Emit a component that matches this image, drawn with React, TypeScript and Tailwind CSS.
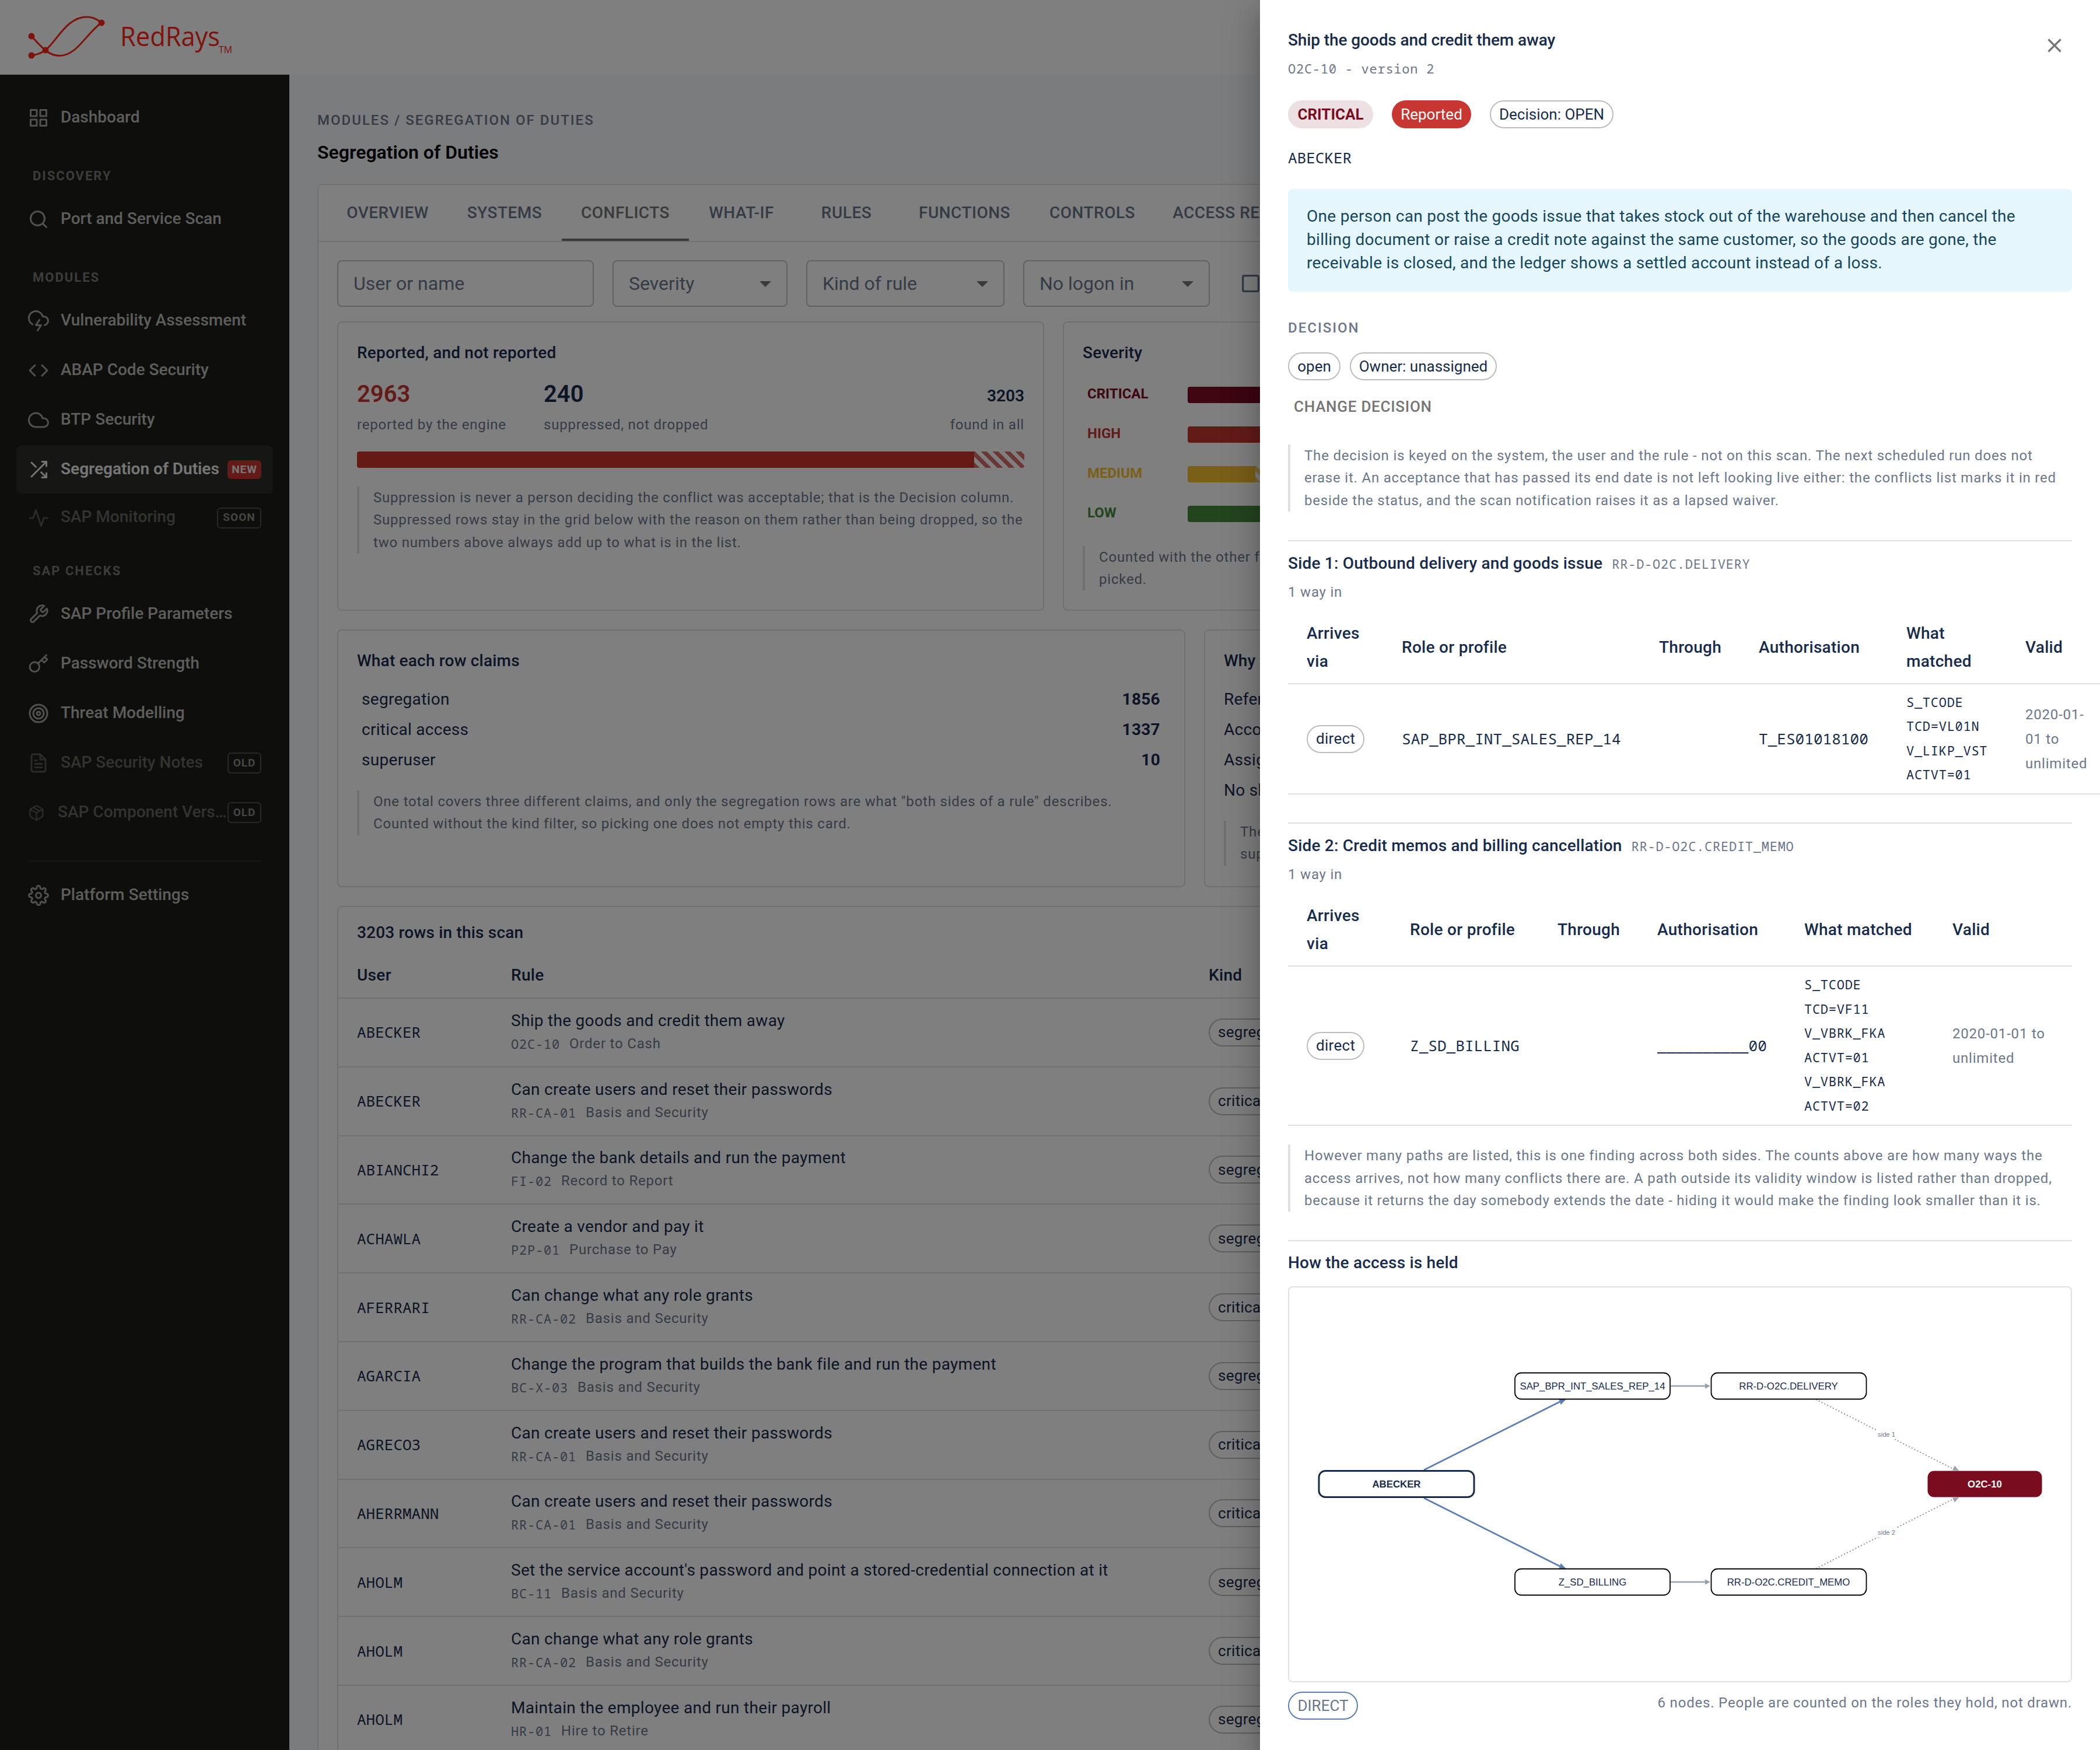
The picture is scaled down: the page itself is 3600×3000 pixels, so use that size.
import React from 'react';
import {
  FiGrid,
  FiSearch,
  FiCloudLightning,
  FiCode,
  FiCloud,
  FiShuffle,
  FiActivity,
  FiTool,
  FiKey,
  FiTarget,
  FiFileText,
  FiPackage,
  FiSettings,
} from 'react-icons/fi';
import { MdClose, MdArrowDropDown, MdCheckBoxOutlineBlank } from 'react-icons/md';

const MONO = "font-['Noto_Sans_Mono','DejaVu_Sans_Mono',monospace]";

function Logo() {
  return (
    <svg width="400" height="110" viewBox="0 0 400 110" fill="none" stroke="#fa2617" className="ml-[30px]">
      <path d="M24 52C32 61 40 70 48 76C56 83 63 85.5 72 85.5C102 85.5 118 47 144 29" strokeWidth="3" />
      <path d="M24 85C33 84 41 81 48 76C68 60 84 19 119 19C129 19 138 24 144 29" strokeWidth="3" />
      <g fill="#fa2617" stroke="none">
        <circle cx="24" cy="52" r="5.5" />
        <circle cx="24" cy="85" r="5.5" />
        <circle cx="48" cy="76" r="5.5" />
        <circle cx="144" cy="29" r="5.5" />
        <text x="176" y="69" fontSize="46" textLength="171" lengthAdjust="spacingAndGlyphs" className="font-['Open_Sans',sans-serif]">RedRays</text>
        <text x="345" y="81" fontSize="16" textLength="23" lengthAdjust="spacingAndGlyphs" className="font-['Open_Sans',sans-serif]">TM</text>
      </g>
    </svg>
  );
}

function NavLabel({ children, className = 'h-[92px]' }: { children: React.ReactNode; className?: string }) {
  return (
    <div className={`flex items-end pb-[21px] pl-7 text-[22px] leading-6 font-bold tracking-[2px] text-[#7a7a78] ${className}`}>
      {children}
    </div>
  );
}

type NavProps = {
  icon: React.ReactNode;
  label: string;
  badge?: string;
  active?: boolean;
  muted?: boolean;
  short?: boolean;
  tight?: boolean;
};

function NavItem({ icon, label, badge, active, muted, short, tight }: NavProps) {
  return (
    <div
      className={`flex items-center rounded-lg px-5 ${short ? 'h-[77px]' : 'h-[82px]'} ${active ? 'bg-[#2d2d2b]' : ''}`}
    >
      <span className={`flex shrink-0 items-center justify-center ${tight ? 'w-[29px] text-[29px]' : 'w-9 text-[36px]'} ${active ? 'text-[#e8e8e8]' : muted ? 'text-[#565654]' : 'text-[#a3a3a1]'}`}>
        {icon}
      </span>
      <span
        className={`min-w-0 truncate pb-[3px] text-[28px] leading-[38px] ${tight ? 'ml-[22px]' : 'ml-5'} ${active ? 'font-semibold text-[#ececec]' : muted ? 'font-medium text-[#666664]' : 'font-medium text-[#bdbdbb]'}`}
      >
        {label}
      </span>
      {badge === 'NEW' && (
        <span className="ml-auto flex h-8 w-[58px] shrink-0 items-center justify-center rounded-md bg-[#C73630] text-[19px] font-bold tracking-[1px] text-[#eee]">
          NEW
        </span>
      )}
      {badge && badge !== 'NEW' && (
        <span className={`ml-auto flex h-9 shrink-0 items-center justify-center rounded-md border-2 border-[#50504e] text-[19px] font-bold tracking-[1px] text-[#8c8c8a] ${badge === 'SOON' ? 'w-[76px]' : 'w-[58px]'}`}>
          {badge}
        </span>
      )}
    </div>
  );
}

function Sidebar() {
  return (
    <nav className="h-full w-[496px] shrink-0 bg-[#1c1c19] px-7 pt-[33px]">
      <NavItem icon={<FiGrid />} label="Dashboard" />
      <NavLabel>DISCOVERY</NavLabel>
      <NavItem icon={<FiSearch />} label="Port and Service Scan" />
      <NavLabel>MODULES</NavLabel>
      <div className="flex flex-col gap-[3px]">
        <NavItem icon={<FiCloudLightning />} label="Vulnerability Assessment" />
        <NavItem icon={<FiCode />} label="ABAP Code Security" />
        <NavItem icon={<FiCloud />} label="BTP Security" />
        <NavItem icon={<FiShuffle />} label="Segregation of Duties" badge="NEW" active />
        <NavItem icon={<FiActivity />} label="SAP Monitoring" badge="SOON" muted short />
      </div>
      <NavLabel className="h-[86px]">SAP CHECKS</NavLabel>
      <div className="flex flex-col gap-[3px]">
        <NavItem icon={<FiTool />} label="SAP Profile Parameters" />
        <NavItem icon={<FiKey />} label="Password Strength" />
        <NavItem icon={<FiTarget />} label="Threat Modelling" />
        <NavItem icon={<FiFileText />} label="SAP Security Notes" badge="OLD" muted />
        <NavItem icon={<FiPackage />} label="SAP Component Versions" badge="OLD" muted tight />
      </div>
      <div className="mx-5 mt-[41px] mb-[17px] h-0.5 bg-[#30302e]" />
      <NavItem icon={<FiSettings />} label="Platform Settings" />
    </nav>
  );
}

type ChipProps = { children: React.ReactNode; border?: string; className?: string };

function Chip({ children, border = 'border-2 border-[#bdbdbd]', className = '' }: ChipProps) {
  return (
    <span className={`inline-flex h-12 items-center justify-center rounded-full px-3.5 text-[26px] whitespace-nowrap ${border} ${className}`}>
      {children}
    </span>
  );
}

function Note({ children, className = '' }: { children: React.ReactNode; className?: string }) {
  return (
    <div className={`border-l-4 border-[#e0e0e0] pl-6 text-[24px] leading-[38.4px] tracking-[0.8px] text-[#6B778C] ${className}`}>
      {children}
    </div>
  );
}

function SelectBox({ label, className }: { label: string; className: string }) {
  return (
    <div className={`flex h-20 shrink-0 items-center justify-between rounded-lg border-2 border-[#c4c4c4] pr-3 pl-[26px] ${className}`}>
      <span>{label}</span>
      <MdArrowDropDown className="text-[48px] text-[#757575]" />
    </div>
  );
}

const tabs = [
  { label: 'OVERVIEW', width: 'w-[205px]' },
  { label: 'SYSTEMS', width: 'w-[196px]' },
  { label: 'CONFLICTS', width: 'w-[218px]' },
  { label: 'WHAT-IF', width: 'w-[180px]' },
  { label: 'RULES', width: 'w-[180px]' },
  { label: 'FUNCTIONS', width: 'w-[225px]' },
  { label: 'CONTROLS', width: 'w-[213px]' },
  { label: 'ACCESS REQUESTS', width: 'w-[319px]' },
];

const severities = [
  { label: 'CRITICAL', text: 'text-[#7A0C20]', bar: 'bg-[#7A0C20]', full: true },
  { label: 'HIGH', text: 'text-[#C73630]', bar: 'bg-[#C73630]', full: true },
  { label: 'MEDIUM', text: 'text-[#F5BE32]', bar: 'bg-[#F5BE32]', full: false },
  { label: 'LOW', text: 'text-[#468A3C]', bar: 'bg-[#468A3C]', full: true },
];

const claims = [
  { label: 'segregation', count: 1856 },
  { label: 'critical access', count: 1337 },
  { label: 'superuser', count: 10 },
];

const reasons = ['Reference user', 'Account locked', 'Assignment expired', 'No shared scope'];

const rows = [
  { user: 'ABECKER', rule: 'Ship the goods and credit them away', id: 'O2C-10', area: 'Order to Cash', kind: 'segregation' },
  { user: 'ABECKER', rule: 'Can create users and reset their passwords', id: 'RR-CA-01', area: 'Basis and Security', kind: 'critical access' },
  { user: 'ABIANCHI2', rule: 'Change the bank details and run the payment', id: 'FI-02', area: 'Record to Report', kind: 'segregation' },
  { user: 'ACHAWLA', rule: 'Create a vendor and pay it', id: 'P2P-01', area: 'Purchase to Pay', kind: 'segregation' },
  { user: 'AFERRARI', rule: 'Can change what any role grants', id: 'RR-CA-02', area: 'Basis and Security', kind: 'critical access' },
  { user: 'AGARCIA', rule: 'Change the program that builds the bank file and run the payment', id: 'BC-X-03', area: 'Basis and Security', kind: 'segregation' },
  { user: 'AGRECO3', rule: 'Can create users and reset their passwords', id: 'RR-CA-01', area: 'Basis and Security', kind: 'critical access' },
  { user: 'AHERRMANN', rule: 'Can create users and reset their passwords', id: 'RR-CA-01', area: 'Basis and Security', kind: 'critical access' },
  { user: 'AHOLM', rule: "Set the service account's password and point a stored-credential connection at it", id: 'BC-11', area: 'Basis and Security', kind: 'segregation' },
  { user: 'AHOLM', rule: 'Can change what any role grants', id: 'RR-CA-02', area: 'Basis and Security', kind: 'critical access' },
  { user: 'AHOLM', rule: 'Maintain the employee and run their payroll', id: 'HR-01', area: 'Hire to Retire', kind: 'segregation' },
];

function ConflictsPage() {
  return (
    <main className="w-[3104px] shrink-0 pl-12">
      <div className="pt-16 text-[24px] leading-[28px] font-medium tracking-[2px] text-[#6B778C]">MODULES / SEGREGATION OF DUTIES</div>
      <h1 className="mt-[19px] text-[32px] leading-[44px] font-semibold text-black">Segregation of Duties</h1>

      <div className="mt-8 h-[2900px] w-[3008px] rounded-lg border-2 border-[#e0e0e0] bg-white">
        <div className="flex h-[98px] border-b-2 border-[#e0e0e0] pl-4">
          {tabs.map((tab) => (
            <div
              key={tab.label}
              className={`flex shrink-0 items-center justify-center text-[28px] font-medium tracking-[0.5px] ${tab.width} ${tab.label === 'CONFLICTS' ? 'border-b-4 border-[#757575] pt-1 text-[#757575]' : 'text-[#6B778C]'}`}
            >
              {tab.label}
            </div>
          ))}
        </div>

        <div className="px-8 pt-[31px]">
          <div className="flex items-center gap-8 text-[32px] text-[#6B778C]">
            <div className="flex h-20 w-[440px] shrink-0 items-center rounded-lg border-2 border-[#c4c4c4] pl-[26px]">User or name</div>
            <SelectBox label="Severity" className="w-[300px]" />
            <SelectBox label="Kind of rule" className="w-[340px]" />
            <SelectBox label="No logon in" className="w-[320px]" />
            <MdCheckBoxOutlineBlank className="ml-[18px] text-[40px]" />
          </div>

          <div className="mt-[25px] flex gap-8">
            <section className="h-[496px] w-[1212px] shrink-0 rounded-lg border-2 border-[#e0e0e0] px-8 pt-[30px]">
              <h2 className="text-[28px] leading-[44px] font-medium tracking-[0.2px]">Reported, and not reported</h2>
              <div className="mt-[19px] flex">
                <div className="w-[320px]">
                  <div className="text-[40px] leading-[60px] font-semibold text-[#C73630]">2963</div>
                  <div className="mt-[3px] text-[24px] leading-[38px] tracking-[0.8px] text-[#6B778C]">reported by the engine</div>
                </div>
                <div>
                  <div className="text-[40px] leading-[60px] font-semibold">240</div>
                  <div className="mt-[3px] text-[24px] leading-[38px] tracking-[0.8px] text-[#6B778C]">suppressed, not dropped</div>
                </div>
                <div className="ml-auto text-right">
                  <div className="pt-1.5 text-[28px] leading-[54px] font-semibold">3203</div>
                  <div className="mt-[3px] text-[24px] leading-[38px] tracking-[0.8px] text-[#6B778C]">found in all</div>
                </div>
              </div>
              <div className="mt-[27px] flex h-7 overflow-hidden rounded-sm">
                <div className="w-[1058px] bg-[#C9342B]" />
                <div className="flex-1 bg-[repeating-linear-gradient(45deg,#d8706a_0_7px,transparent_7px_14px)]" />
              </div>
              <Note className="mt-8">
                Suppression is never a person deciding the conflict was acceptable; that is the Decision column. Suppressed rows stay in the grid below with the reason on them rather than being dropped, so the two numbers above always add up to what is in the list.
              </Note>
            </section>
            <section className="h-[496px] w-[1212px] shrink-0 rounded-lg border-2 border-[#e0e0e0] px-8 pt-[30px]">
              <h2 className="text-[28px] leading-[44px] font-medium tracking-[0.2px]">Severity</h2>
              <div className="mt-4">
                {severities.map((s) => (
                  <div key={s.label} className="flex h-[68px] items-center">
                    <div className={`w-[180px] pb-1 pl-2 text-[24px] font-bold ${s.text}`}>{s.label}</div>
                    <div className="flex h-7 flex-1 overflow-hidden rounded-sm">
                      <div className={`${s.bar} ${s.full ? 'w-[700px]' : 'w-[116px]'}`} />
                      {!s.full && <div className="w-10 bg-[repeating-linear-gradient(45deg,#f8d06a_0_7px,transparent_7px_14px)]" />}
                    </div>
                  </div>
                ))}
              </div>
              <Note className="mt-[21px]">
                Counted with the other filters but
                <br />
                picked.
              </Note>
            </section>
          </div>

          <div className="mt-8 flex gap-8">
            <section className="h-[442px] w-[1454px] shrink-0 rounded-lg border-2 border-[#e0e0e0] px-8 pt-[30px]">
              <h2 className="text-[28px] leading-[44px] font-medium tracking-[0.2px]">What each row claims</h2>
              <div className="mt-[18px] pr-[9px] pl-2 text-[28px] leading-[52px] tracking-[0.3px]">
                {claims.map((c) => (
                  <div key={c.label} className="flex justify-between">
                    <span>{c.label}</span>
                    <span className="font-bold">{c.count}</span>
                  </div>
                ))}
              </div>
              <Note className="mt-[26px]">
                One total covers three different claims, and only the segregation rows are what "both sides of a rule" describes. Counted without the kind filter, so picking one does not empty this card.
              </Note>
            </section>
            <section className="h-[442px] w-[970px] shrink-0 rounded-lg border-2 border-[#e0e0e0] px-8 pt-[30px]">
              <h2 className="text-[28px] leading-[44px] font-medium tracking-[0.2px]">Why they were suppressed</h2>
              <div className="mt-[18px] text-[28px] leading-[52px] tracking-[0.3px]">
                {reasons.map((r) => (
                  <div key={r}>{r}</div>
                ))}
              </div>
              <Note className="mt-[26px]">
                The reasons here explain every
                <br />
                suppressed row.
              </Note>
            </section>
          </div>

          <section className="mt-8 h-[1700px] rounded-lg border-2 border-[#e0e0e0]">
            <h2 className="px-8 pt-[22px] text-[28px] leading-[44px] font-medium tracking-[0.2px]">3203 rows in this scan</h2>
            <div className="mt-[11px] flex h-[80px] items-center border-b-2 border-[#e0e0e0] px-8 pt-0.5 text-[28px] font-medium tracking-[0.3px]">
              <div className="w-[264px]">User</div>
              <div className="w-[1196px]">Rule</div>
              <div>Kind</div>
            </div>
            {rows.map((row, i) => (
              <div key={i} className="flex h-[117.8px] items-center border-b-2 border-[#e0e0e0] px-8">
                <div className={`w-[264px] text-[26px] ${MONO}`}>{row.user}</div>
                <div className="w-[1196px]">
                  <div className="text-[28px] leading-[40px] tracking-[0.3px]">{row.rule}</div>
                  <div className="flex gap-4 pb-0.5 text-[24px] leading-[38px] tracking-[0.8px] text-[#6B778C]">
                    <span className={`text-[22px] ${MONO}`}>{row.id}</span>
                    <span>{row.area}</span>
                  </div>
                </div>
                <Chip className="tracking-[0.3px]">{row.kind}</Chip>
              </div>
            ))}
          </section>
        </div>
      </div>
    </main>
  );
}

type Side = {
  title: string;
  code: string;
  cols: string;
  role: string;
  auth: string;
  matchHead: React.ReactNode;
  matched: string[];
  valid: string[];
  bodyHeight: string;
};

const sides: Side[] = [
  {
    title: 'Side 1: Outbound delivery and goods issue',
    code: 'RR-D-O2C.DELIVERY',
    cols: 'grid-cols-[163px_441px_171px_253px_204px_160px] w-[1424px]',
    role: 'SAP_BPR_INT_SALES_REP_14',
    auth: 'T_ES01018100',
    matchHead: <>What<br />matched</>,
    matched: ['S_TCODE', 'TCD=VL01N', 'V_LIKP_VST', 'ACTVT=01'],
    valid: ['2020-01-', '01 to', 'unlimited'],
    bodyHeight: 'h-[189px]',
  },
  {
    title: 'Side 2: Credit memos and billing cancellation',
    code: 'RR-D-O2C.CREDIT_MEMO',
    cols: 'grid-cols-[177px_253px_171px_252px_254px_205px] w-[1344px]',
    role: 'Z_SD_BILLING',
    auth: '__________00',
    matchHead: 'What matched',
    matched: ['S_TCODE', 'TCD=VF11', 'V_VBRK_FKA', 'ACTVT=01', 'V_VBRK_FKA', 'ACTVT=02'],
    valid: ['2020-01-01 to', 'unlimited'],
    bodyHeight: 'h-[273px]',
  },
];

function SideTable({ side }: { side: Side }) {
  return (
    <section className="border-t-2 border-[#e0e0e0] pt-4">
      <div className="flex items-baseline gap-4 leading-[44px]">
        <h3 className="text-[28px] font-medium tracking-[0.2px]">{side.title}</h3>
        <span className={`text-[22px] tracking-[0.75px] text-[#6B778C] ${MONO}`}>{side.code}</span>
      </div>
      <div className="mt-2 text-[24px] leading-[38px] tracking-[0.8px] text-[#6B778C]">1 way in</div>
      <div className={`mt-3.5 grid h-[125px] items-center border-b-2 border-[#e0e0e0] pl-8 text-[28px] leading-[48px] font-medium tracking-[0.3px] ${side.cols}`}>
        <div>Arrives<br />via</div>
        <div>Role or profile</div>
        <div>Through</div>
        <div>Authorisation</div>
        <div>{side.matchHead}</div>
        <div>Valid</div>
      </div>
      <div className={`grid items-center border-b-2 border-[#e0e0e0] pl-8 ${side.bodyHeight} ${side.cols}`}>
        <div className="flex"><Chip className="tracking-[0.3px]">direct</Chip></div>
        <div className={`text-[26px] tracking-[0.05px] ${MONO}`}>{side.role}</div>
        <div />
        <div className={`text-[26px] tracking-[0.05px] ${MONO}`}>{side.auth}</div>
        <div className={`pb-0.5 text-[22px] leading-[41.6px] tracking-[0.73px] ${MONO}`}>
          {side.matched.map((m, i) => (
            <div key={i}>{m}</div>
          ))}
        </div>
        <div className="text-[24px] leading-[42px] tracking-[0.8px] text-[#6B778C]">
          {side.valid.map((v) => (
            <div key={v}>{v}</div>
          ))}
        </div>
      </div>
    </section>
  );
}

function AccessGraph() {
  return (
    <svg
      viewBox="2210 2207 1340 675"
      className="block h-[675px] w-[1340px] font-['Liberation_Sans',Arial,sans-serif]"
      fontSize="16.8"
      textAnchor="middle"
    >
      <g stroke="#5B7FB5" fill="#5B7FB5">
        <path d="M2441 2520L2680 2400M2441 2568L2680 2688" strokeWidth="2.8" />
        <path d="M2684 2399L2676 2407.5L2673 2399Z M2684 2689L2676 2680.5L2673 2689Z" strokeWidth="1" />
      </g>
      <g stroke="#97A0AF" fill="#97A0AF">
        <path d="M2864 2376H2924M2864 2712H2924" strokeWidth="2.4" />
        <path d="M2932 2376L2923 2371.5V2380.5ZM2932 2712L2923 2707.5V2716.5Z" stroke="none" />
        <path d="M3113 2399L3352 2520M3113 2689L3352 2568" stroke="#8D95A3" strokeWidth="2" strokeDasharray="2 3.4" />
        <path d="M3358 2521L3347 2520.5L3351 2512.5ZM3358 2567L3347 2567.5L3351 2575.5Z" stroke="none" />
      </g>
      <g fill="#fff">
        <rect x="3217" y="2451" width="35" height="16" />
        <rect x="3217" y="2619" width="35" height="16" />
      </g>
      <g fontSize="11.2" fill="#6B778C">
        <text x="3234" y="2463">side 1</text>
        <text x="3234" y="2631">side 2</text>
      </g>
      <g fill="#fff" stroke="#000" strokeWidth="1.8">
        <rect x="2597" y="2353.5" width="266" height="45" rx="11" />
        <rect x="2933.5" y="2353.5" width="266" height="45" rx="11" />
        <rect x="2597" y="2689.5" width="266" height="45" rx="11" />
        <rect x="2933.5" y="2689.5" width="266" height="45" rx="11" />
        <rect x="2261" y="2521.5" width="266" height="45" rx="11" stroke="#172B4D" strokeWidth="3" />
      </g>
      <rect x="3304.5" y="2521.5" width="196" height="45" rx="11" fill="#7A0C20" />
      <g fill="#172B4D">
        <text x="2730" y="2381.5">SAP_BPR_INT_SALES_REP_14</text>
        <text x="3066" y="2381.5">RR-D-O2C.DELIVERY</text>
        <text x="2730" y="2717.5">Z_SD_BILLING</text>
        <text x="3066" y="2717.5">RR-D-O2C.CREDIT_MEMO</text>
        <text x="2394" y="2549.5" fontWeight="700">ABECKER</text>
        <text x="3402.5" y="2549.5" fontWeight="700" fill="#fff">O2C-10</text>
      </g>
    </svg>
  );
}

function ConflictDrawer() {
  return (
    <aside className="absolute inset-y-0 right-0 w-[1440px] overflow-hidden bg-white px-12 pt-[46px] shadow-[0_16px_20px_-10px_rgba(0,0,0,0.2),0_32px_48px_4px_rgba(0,0,0,0.14),0_12px_60px_10px_rgba(0,0,0,0.12)]">
      <div className="flex h-[126px] justify-between">
        <div>
          <h2 className="pt-px text-[28px] leading-[44px] font-medium tracking-[-0.1px]">Ship the goods and credit them away</h2>
          <div className={`mt-[7px] text-[22px] leading-[38px] tracking-[0.75px] text-[#6B778C] ${MONO}`}>O2C-10 - version 2</div>
        </div>
        <MdClose className="mt-3 mr-2.5 text-[40px] text-[#757575]" />
      </div>

      <div className="flex gap-8">
        <Chip border="bg-[#EDE0E3]" className="w-[146px] font-bold text-[#7A0C20]">CRITICAL</Chip>
        <Chip border="bg-[#C73630]" className="w-[136px] text-white">Reported</Chip>
        <Chip className="w-[212px]">Decision: OPEN</Chip>
      </div>
      <div className={`mt-[30px] text-[26px] leading-[40px] ${MONO}`}>ABECKER</div>

      <div className="mt-[34px] h-[176px] rounded-lg bg-[#E5F6FD] px-8 pt-[27px] text-[28px] leading-[40px] tracking-[0.3px] text-[#14465F]">
        One person can post the goods issue that takes stock out of the warehouse and then cancel the billing document or raise a credit note against the same customer, so the goods are gone, the receivable is closed, and the ledger shows a settled account instead of a loss.
      </div>

      <div className="mt-11 text-[24px] leading-[36px] font-medium tracking-[2px] text-[#6B778C]">DECISION</div>
      <div className="mt-6 flex gap-4">
        <Chip className="w-[90px]">open</Chip>
        <Chip className="w-[252px]">Owner: unassigned</Chip>
      </div>
      <div className="mt-[21px] pl-2.5 text-[26px] leading-[48px] font-medium tracking-[0.74px] text-[#757575]">CHANGE DECISION</div>
      <Note className="mt-[41px] mb-[49px]">
        The decision is keyed on the system, the user and the rule - not on this scan. The next scheduled run does not erase it. An acceptance that has passed its end date is not left looking live either: the conflicts list marks it in red beside the status, and the scan notification raises it as a lapsed waiver.
      </Note>

      <SideTable side={sides[0]} />
      <div className="mt-12">
        <SideTable side={sides[1]} />
      </div>

      <Note className="mt-8">
        However many paths are listed, this is one finding across both sides. The counts above are how many ways the access arrives, not how many conflicts there are. A path outside its validity window is listed rather than dropped, because it returns the day somebody extends the date - hiding it would make the finding look smaller than it is.
      </Note>

      <h3 className="mt-[49px] border-t-2 border-[#e0e0e0] pt-[15px] text-[28px] leading-[44px] font-medium tracking-[0.2px]">How the access is held</h3>
      <div className="mt-[18px] rounded-lg border-2 border-[#e0e0e0]">
        <AccessGraph />
      </div>
      <div className="mt-4 flex items-start justify-between text-[#6B778C]">
        <Chip border="border-2 border-[#5B7FB5]" className="w-[120px]">DIRECT</Chip>
        <span className="text-[24px] leading-[38px] tracking-[0.8px]">6 nodes. People are counted on the roles they hold, not drawn.</span>
      </div>
    </aside>
  );
}

export default function App() {
  return (
    <div className="relative h-[3000px] w-[3600px] overflow-hidden bg-[#F7F9FC] font-[Roboto,sans-serif] text-[#172B4D]">
      <header className="flex h-32 items-start bg-white pt-2.5">
        <Logo />
      </header>
      <div className="flex h-[2872px]">
        <Sidebar />
        <ConflictsPage />
      </div>
      <div className="absolute inset-0 bg-black/50" />
      <ConflictDrawer />
    </div>
  );
}
